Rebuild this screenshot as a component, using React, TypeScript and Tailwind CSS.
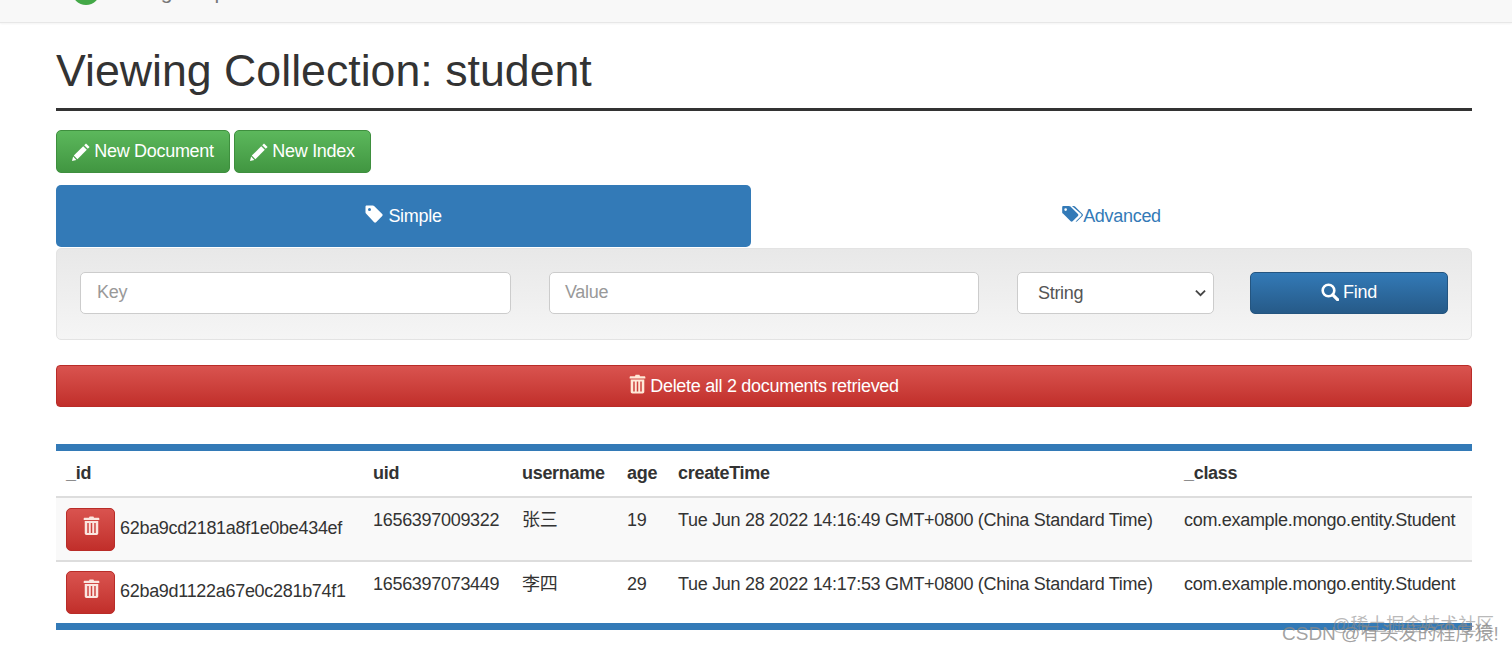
import React from "react";

const Trash = ({ className }: { className?: string }) => (
  <svg viewBox="0 0 16 18" className={className} fill="currentColor">
    <path d="M5.6 1.6 6.2.4h3.6l.6 1.2h4c.6 0 1 .4 1 1v1.2H.6V2.6c0-.6.4-1 1-1h4z" />
    <path fillRule="evenodd" d="M1.6 4.8h12.8v11.6c0 .9-.7 1.6-1.6 1.6H3.2c-.9 0-1.6-.7-1.6-1.6V4.8zM4 6.6v9.4h1.4V6.6H4zm3.3 0v9.4h1.4V6.6H7.300zm3.300 0v9.4H12V6.6h-1.400z" />
  </svg>
);
const Pencil = ({ className }: { className?: string }) => (
  <svg viewBox="0 0 18 18" className={className} fill="currentColor">
    <path d="M14 .4 17.600 4 15.800 5.800 12.200 2.200z" />
    <path d="M11.200 3.200 14.800 6.800 5.400 16.200 1.800 12.600z" />
    <path d="M1.100 13.600 4.400 16.900 0 18z" />
  </svg>
);
const Tag = ({ className }: { className?: string }) => (
  <svg viewBox="0 0 18 18" className={className} fill="currentColor">
    <path fillRule="evenodd" d="M.5 1.800C.5 1 1 .5 1.800.5h6c.5 0 1 .2 1.300.5l8.100 8.100c.6.6.6 1.400 0 2l-6.100 6.100c-.6.6-1.400.6-2 0L1 8.600c-.3-.3-.5-.8-.5-1.300v-5.500zM4.500 3a1.500 1.500 0 1 0 0 3 1.500 1.500 0 0 0 0-3z" />
  </svg>
);
const Tags = ({ className }: { className?: string }) => (
  <svg viewBox="0 0 22 18" className={className} fill="currentColor">
    <path fillRule="evenodd" d="M.2 1.800C.2 1 .7.500 1.500.500h5.800c.5 0 1 .2 1.300.5l8.100 8.100c.6.600.6 1.400 0 2l-5.600 5.600c-.6.600-1.400.600-2 0L1 8.600c-.5-.4-.8-.8-.8-1.300v-5.500zM3.800 3a1.400 1.400 0 1 0 0 2.800 1.400 1.400 0 0 0 0-2.800z" />
    <path d="M10.400.5h1.700c.5 0 1 .2 1.300.5l8.100 8.100c.6.600.6 1.400 0 2l-5.600 5.600c-.5.500-1.100.500-1.600.200l5.800-5.800c.6-.600.6-1.400 0-2L10.400.5z" />
  </svg>
);
const Search = ({ className }: { className?: string }) => (
  <svg viewBox="0 0 18 18" className={className} fill="none" stroke="currentColor">
    <circle cx="7.500" cy="7.500" r="5.800" strokeWidth="2.600" />
    <path d="M11.800 11.800 16.600 16.600" strokeWidth="3.200" strokeLinecap="round" />
  </svg>
);

const rows = [
  { id: "62ba9cd2181a8f1e0be434ef", uid: "1656397009322", name: "张三", age: "19", time: "Tue Jun 28 2022 14:16:49 GMT+0800 (China Standard Time)", striped: true },
  { id: "62ba9d1122a67e0c281b74f1", uid: "1656397073449", name: "李四", age: "29", time: "Tue Jun 28 2022 14:17:53 GMT+0800 (China Standard Time)", striped: false },
];

const greenBtn =
  "flex h-[43px] items-center rounded-[5px] border border-[#3e8f3e] bg-gradient-to-b from-[#5cb85c] to-[#419641] text-white";

export default function App() {
  return (
    <div
      className="relative h-[653px] w-[1512px] overflow-hidden bg-white text-[18px] tracking-[-0.3px] text-[#333]"
      style={{ fontFamily: '"Liberation Sans", "Noto Sans CJK SC", sans-serif' }}
    >
      <div className="flex h-[23px] items-start overflow-hidden border-b border-[#e7e7e7] bg-[#f8f8f8] pl-[72px] shadow-[0_1px_2px_rgba(0,0,0,0.05)]">
        <div className="mt-[-23px] h-[28px] w-[28px] rounded-full bg-[#43a847]" />
        <span className="ml-[20px] mt-[-20px] text-[21px] leading-[24px] tracking-normal text-[#777]">Mongo Express</span>
      </div>

      <div className="pl-[56px] pr-[40px]">
        <h1 className="mt-[21px] h-[64px] text-[44.700px] leading-[54px] tracking-normal text-[#333]">
          Viewing Collection: student
        </h1>
        <div className="h-[3px] bg-[#333]" />

        <div className="mt-[19px] flex gap-[4px]">
          <button className={`${greenBtn} w-[174px] justify-center`}>
            <Pencil className="mr-[4px] h-[18px] w-[18px]" />
            New Document
          </button>
          <button className={`${greenBtn} w-[137px] justify-center`}>
            <Pencil className="mr-[4px] h-[18px] w-[18px]" />
            New Index
          </button>
        </div>

        <div className="mt-[12px] flex h-[62px]">
          <div className="flex w-[695px] items-center justify-center rounded-[5px] bg-[#337ab7] text-white">
            <Tag className="mr-[5px] mt-[-4px] h-[18px] w-[18px]" />
            Simple
          </div>
          <div className="flex flex-1 items-center justify-center text-[#337ab7]">
            <Tags className="mt-[-4px] h-[18px] w-[21px]" />
            Advanced
          </div>
        </div>

        <div className="mt-[1px] flex h-[92px] items-center rounded-[5px] border border-[#e3e3e3] bg-gradient-to-b from-[#e8e8e8] to-[#f5f5f5] pb-[2px] pl-[23px] pr-[23px]">
          <div className="flex h-[42px] w-[431px] items-center rounded-[5px] border border-[#ccc] bg-white pb-[2px] pl-[16px] text-[#999]">
            Key
          </div>
          <div className="ml-[38px] flex h-[42px] w-[430px] items-center rounded-[5px] border border-[#ccc] bg-white pb-[2px] pl-[15px] text-[#999]">
            Value
          </div>
          <div className="ml-[38px] flex h-[42px] w-[197px] items-center justify-between rounded-[5px] border border-[#ccc] bg-white pl-[20px] pr-[7px] text-[#555]">
            String
            <svg viewBox="0 0 12 8" className="h-[8px] w-[11px]" fill="none" stroke="#444" strokeWidth="2">
              <path d="M1 1.500 6 6.300 11 1.500" />
            </svg>
          </div>
          <button className="ml-[36px] flex h-[42px] w-[198px] items-center justify-center rounded-[5px] border border-[#245580] bg-gradient-to-b from-[#337ab7] to-[#265a88] pb-[2px] text-white">
            <Search className="mr-[4px] h-[18px] w-[18px]" />
            Find
          </button>
        </div>

        <button className="mt-[25px] flex h-[42px] w-full items-center justify-center rounded-[4px] border border-[#b92c28] bg-gradient-to-b from-[#d9534f] to-[#c12e2a] text-[#fff]">
          <Trash className="mr-[4px] mt-[-5px] h-[20px] w-[17px] text-[#ffe9d8]" />
          Delete all 2 documents retrieved
        </button>

        <table className="mt-[37px] w-[1416px] table-fixed border-y-[7px] border-[#337ab7] text-left">
          <colgroup>
            <col className="w-[307px]" />
            <col className="w-[149px]" />
            <col className="w-[105px]" />
            <col className="w-[51px]" />
            <col className="w-[506px]" />
            <col className="w-[298px]" />
          </colgroup>
          <thead>
            <tr className="h-[49px] border-b-[2px] border-[#ddd] align-middle">
              {["_id", "uid", "username", "age", "createTime", "_class"].map((h) => (
                <th key={h} className="px-[10px] font-bold">
                  {h}
                </th>
              ))}
            </tr>
          </thead>
          <tbody>
            {rows.map((r) => (
              <tr key={r.id} className={r.striped ? "h-[64px] border-b-[2px] border-[#ddd] bg-[#f9f9f9]" : "h-[66px] bg-white"}>
                <td className="px-[10px] align-top">
                  <div className={r.striped ? "mt-[10px] flex items-start whitespace-nowrap" : "mt-[9px] flex items-start whitespace-nowrap"}>
                    <button className="mr-[5px] flex h-[43px] w-[49px] shrink-0 items-center justify-center rounded-[5px] border border-[#b92c28] bg-gradient-to-b from-[#d9534f] to-[#c12e2a] text-[#fbe6e0]">
                      <Trash className="ml-[1px] mt-[-8px] h-[19px] w-[17px]" />
                    </button>
                    <span className="mt-[7px]">{r.id}</span>
                  </div>
                </td>
                <td className="whitespace-nowrap px-[10px] pt-[9px] align-top">{r.uid}</td>
                <td className="whitespace-nowrap px-[10px] pt-[9px] align-top">{r.name}</td>
                <td className="whitespace-nowrap px-[10px] pt-[9px] align-top">{r.age}</td>
                <td className="whitespace-nowrap px-[10px] pt-[9px] align-top">{r.time}</td>
                <td className="whitespace-nowrap px-[10px] pt-[9px] align-top">com.example.mongo.entity.Student</td>
              </tr>
            ))}
          </tbody>
        </table>
      </div>

      <span className="absolute left-[1332px] top-[612px] text-[18px] tracking-normal text-[#8a8a8a]/60">@稀土掘金技术社区</span>
      <span className="absolute left-[1282px] top-[620px] text-[19px] tracking-normal text-[#8a8a8a]/80">CSDN @有头发的程序猿!</span>
    </div>
  );
}
